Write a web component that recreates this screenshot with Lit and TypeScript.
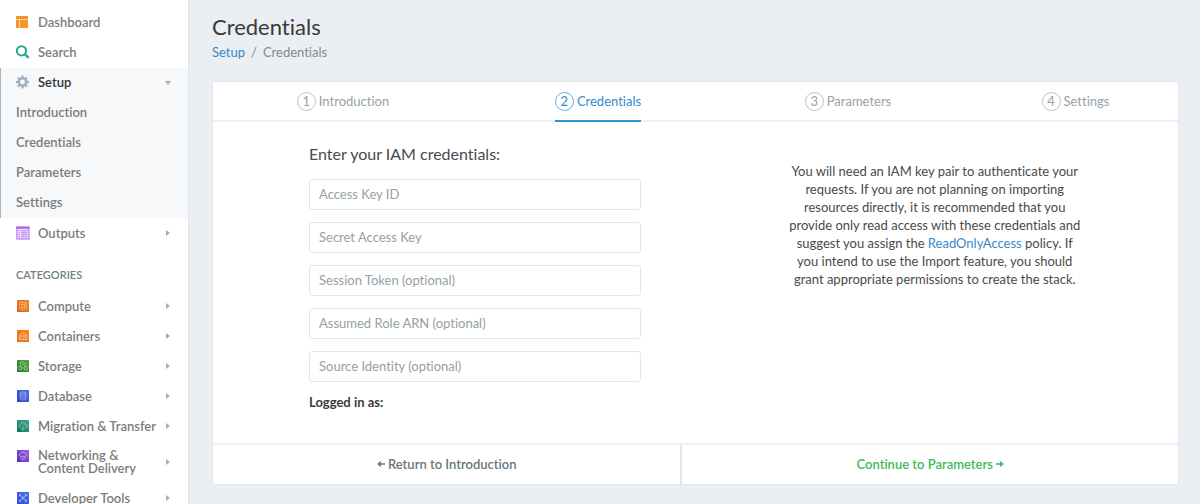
import { LitElement, html, css, svg, nothing } from "lit";
import type { TemplateResult } from "lit";

type IconName =
  | "dashboard" | "search" | "gear" | "outputs" | "compute" | "containers"
  | "storage" | "database" | "migration" | "network" | "tools";

interface NavItem {
  label: string;
  icon: IconName;
  arrow: boolean;
}

const CATEGORIES: NavItem[] = [
  { label: "Compute", icon: "compute", arrow: true },
  { label: "Containers", icon: "containers", arrow: true },
  { label: "Storage", icon: "storage", arrow: true },
  { label: "Database", icon: "database", arrow: true },
  { label: "Migration & Transfer", icon: "migration", arrow: true },
  { label: "Networking & Content Delivery", icon: "network", arrow: true },
  { label: "Developer Tools", icon: "tools", arrow: true },
];

const SETUP_PAGES = ["Introduction", "Credentials", "Parameters", "Settings"];

const FIELDS = [
  "Access Key ID",
  "Secret Access Key",
  "Session Token (optional)",
  "Assumed Role ARN (optional)",
  "Source Identity (optional)",
];

// Service tiles share a gradient square with a pale line glyph on it.
const tile = (id: string, from: string, to: string, glyph: TemplateResult) => svg`
  <defs><linearGradient id=${id} x1="0" y1="1" x2="1" y2="0">
    <stop offset="0" stop-color=${from}/><stop offset="1" stop-color=${to}/>
  </linearGradient></defs>
  <rect x="1" y="1" width="12" height="12" fill=${`url(#${id})`}/>
  <g fill="none" stroke="#fff" stroke-opacity=".5" stroke-width=".8">${glyph}</g>`;

const teeth = [0, 45, 90, 135, 180, 225, 270, 315];

const ICONS: Record<IconName, TemplateResult> = {
  dashboard: svg`<g fill="#f6962a">
    <rect x="0" y="1" width="12" height="3"/><rect x="0" y="4.6" width="3.4" height="8.4"/><rect x="4" y="4.6" width="8" height="8.4"/></g>`,
  search: svg`<g fill="none" stroke="#27a98b" stroke-width="2">
    <circle cx="5.5" cy="5.8" r="4.6"/><path d="M8.8 9.1 12.6 12.8" stroke-width="2.4"/></g>`,
  gear: svg`<circle cx="6.5" cy="7" r="3.6" fill="none" stroke="#a3b1bd" stroke-width="2.4"/>
    <g fill="#a3b1bd">${teeth.map((a) => svg`<rect x="5.3" y=".5" width="2.4" height="2.6" rx=".5" transform=${`rotate(${a} 6.5 7)`}/>`)}</g>`,
  outputs: svg`<rect x=".9" y="1" width="12" height="12" fill="#f0e4fd" stroke="#b57bee" stroke-width="1.2"/>
    <path d="M.3 1.8H13.5" stroke="#a765e6" stroke-width="2"/>
    <path d="M2.6 4.8H4M2.6 6.8H4M2.6 8.8H4M2.6 10.8H4M5 4.8H11.4M5 6.8H11.4M5 8.8H11.4M5 10.8H11.4" stroke="#b57bee" stroke-width="1"/>`,
  compute: tile("g-compute", "#d8601c", "#f88d1e", svg`
    <rect x="3.6" y="3.6" width="6.8" height="6.8" rx="1"/><rect x="5.4" y="5.4" width="3.2" height="3.2"/>`),
  containers: tile("g-containers", "#e8681a", "#f98c14", svg`
    <path d="M3 6.8H11V10.6H3ZM4.8 7V10.6M7 7V10.6M9.2 7V10.6M3 6.4 7 4.2 11 6.4M7 2.4V4.2"/>`),
  storage: tile("g-storage", "#277a2b", "#55a83c", svg`
    <path d="M4.6 6.8V3H7.8L9.2 4.4V6.8M5.8 5.2H8M3 7.4H5.6V10.8H3ZM8.4 7.4H11V10.8H8.4ZM5.6 9H8.4"/>`),
  database: tile("g-database", "#2f42c4", "#4c70f0", svg`
    <ellipse cx="7" cy="4" rx="2.8" ry="1"/><path d="M4.2 4V10C4.2 11.3 9.8 11.3 9.8 10V4M4.2 6C4.2 7.2 9.8 7.2 9.8 6M4.2 8C4.2 9.2 9.8 9.2 9.8 8"/>`),
  migration: tile("g-migration", "#14735e", "#41ac8b", svg`
    <path d="M4.6 8.8C2.6 8.6 2.5 6 4.4 5.9 4.6 3 8.6 2.8 9 5.4 11.6 5.4 11.6 8.6 9.4 8.8M7 6.6V11M5.4 9.6 7 11.2 8.6 9.6"/>`),
  network: tile("g-network", "#5a2bb2", "#9b63ea", svg`
    <path d="M4.4 7.4C2.8 7.2 2.9 5.2 4.5 5.1 4.8 2.5 8.6 2.4 9 4.8 11.2 4.9 11.3 7.2 9.6 7.4ZM4 9H10M5 10.8H9"/>`),
  tools: tile("g-tools", "#2f48d0", "#4a73f2", svg`
    <path d="M3.4 3.4 10.6 10.6M10.6 3.4 3.4 10.6" stroke-width="1.1"/><path d="M2.8 5.2 5.2 2.8M9 11.2 11.2 9M9 2.8 11.2 5M2.8 9 5 11.2"/>`),
};

class NavIcon extends LitElement {
  static properties = { name: {} };
  declare name: IconName;
  static styles = css`
    :host { display: block; width: 14px; height: 14px; }
    .icon { display: block; width: 14px; height: 14px; }
  `;
  render() {
    return html`<svg class="icon" viewBox="0 0 14 14" aria-hidden="true">${ICONS[this.name]}</svg>`;
  }
}
customElements.define("nav-icon", NavIcon);

class SideNav extends LitElement {
  static styles = css`
    :host {
      display: block;
      box-sizing: border-box;
      padding-top: 7px;
      background: #fff;
      border-right: 1px solid #dce4ec;
      overflow: hidden;
    }
    .row {
      box-sizing: border-box;
      display: grid;
      grid-template-columns: 22px 1fr 8px;
      align-items: center;
      min-height: 30px;
      padding: 8px 16px;
      color: #7c7c7a;
      font-weight: 600;
      line-height: 13px;
      text-decoration: none;
    }
    .row nav-icon { align-self: start; }
    .group {
      margin-top: 1px;
      background: #f6f8fa;
      box-shadow: inset 1px 0 #a9b6bf;
    }
    .row.current { padding: 7px 16px 9px; color: #333; }
    .row.sub { display: block; }
    .heading {
      margin: 17px 16px 6px;
      color: #6f8087;
      font-size: 11px;
      font-weight: 600;
      line-height: 20px;
      text-transform: uppercase;
    }
    .arrow { width: 8px; height: 8px; fill: #a3aeb6; }
    .label { max-width: 120px; }
    .list { display: grid; }
  `;

  private row(item: NavItem) {
    return html`<a class="row" href="#">
      <nav-icon name=${item.icon}></nav-icon>
      <span class="label">${item.label}</span>
      ${item.arrow
        ? html`<svg class="arrow" viewBox="0 0 8 8" aria-hidden="true"><path d="M2 1 6 4 2 7Z" /></svg>`
        : nothing}
    </a>`;
  }

  render() {
    return html`<nav aria-label="Main">
      ${this.row({ label: "Dashboard", icon: "dashboard", arrow: false })}
      ${this.row({ label: "Search", icon: "search", arrow: false })}
      <div class="group">
        <a class="row current" href="#">
          <nav-icon name="gear"></nav-icon>
          <span class="label">Setup</span>
          <svg class="arrow" viewBox="0 0 8 8" aria-hidden="true"><path d="M1 3H7L4 7Z" /></svg>
        </a>
        ${SETUP_PAGES.map((p) => html`<a class="row sub" href="#">${p}</a>`)}
      </div>
      ${this.row({ label: "Outputs", icon: "outputs", arrow: true })}
      <h2 class="heading">Categories</h2>
      <div class="list">${CATEGORIES.map((c) => this.row(c))}</div>
    </nav>`;
  }
}
customElements.define("side-nav", SideNav);

class AppRoot extends LitElement {
  static styles = css`
    :host {
      display: grid;
      grid-template-columns: 189px minmax(0, 1fr);
      height: 100vh;
      overflow: hidden;
      background: #ebeef3;
      color: #4a4a4a;
      font-family: Lato, "Liberation Sans", sans-serif;
      font-size: 13px;
      font-variant-ligatures: none;
    }
    .main { padding: 14px 21px 19px 23px; overflow: hidden; }
    .title { margin: 0; color: #3a3a3a; font-size: 22px; font-weight: 400; line-height: 26px; }
    .crumbs {
      display: flex;
      gap: 6px;
      margin-top: 2px;
      color: #7f898e;
      line-height: 20px;
    }
    .link { color: #3689ca; text-decoration: none; }
    .card {
      margin-top: 19px;
      background: #fff;
      border: 1px solid #dfe6ec;
      border-radius: 3px;
    }
    .tabs {
      display: grid;
      grid-template-columns: 52fr 50fr 50fr 41fr;
      justify-items: center;
      box-shadow: inset 0 -2px #edf2f4;
    }
    .tab {
      box-sizing: border-box;
      display: flex;
      align-items: center;
      gap: 3px;
      height: 40px;
      color: #98a2a8;
      text-decoration: none;
      border-bottom: 2px solid transparent;
    }
    .tab.active { color: #3689ca; border-color: #3292cf; }
    .num {
      box-sizing: border-box;
      width: 19px;
      height: 19px;
      border: 1px solid #bcc4cb;
      border-radius: 50%;
      line-height: 17px;
      text-align: center;
    }
    .active .num { border-color: #5eb0e2; }
    .body {
      display: flex;
      justify-content: space-between;
      padding: 22px 10% 31px;
      padding-left: 96px;
    }
    .form { width: 43%; }
    .prompt { margin: 0 0 15px; font-size: 16px; font-weight: 400; line-height: 20px; }
    .fields { display: grid; gap: 12px; }
    .field {
      box-sizing: border-box;
      display: block;
      width: 100%;
      height: 31px;
      padding: 0 9px 2px;
      border: 1px solid #dfe9ec;
      border-radius: 3px;
      background: #fff;
      color: #444;
      font: inherit;
    }
    .field::placeholder { color: #94a1a5; opacity: 1; }
    .session { margin: 10px 0 0; color: #3a3a3a; font-weight: 700; line-height: 20px; }
    .help { width: 38%; margin: 18px 0 0; line-height: 18px; text-align: center; }
    .actions {
      display: grid;
      grid-template-columns: 31fr 33fr;
      border-top: 2px solid #edf2f4;
    }
    .action {
      display: flex;
      align-items: center;
      justify-content: center;
      gap: 3px;
      height: 39px;
      padding: 0 0 2px;
      border: 0;
      background: none;
      color: #66777e;
      font: inherit;
      font-weight: 600;
    }
    .action + .action { border-left: 2px solid #dfe6ec; color: #3cba58; }
    .glyph { width: 8px; height: 8px; fill: currentColor; }
  `;

  render() {
    return html`
      <side-nav></side-nav>
      <main class="main">
        <h1 class="title">Credentials</h1>
        <nav class="crumbs" aria-label="Breadcrumb">
          <a class="link" href="#">Setup</a><span>/</span><span>Credentials</span>
        </nav>
        <section class="card">
          <nav class="tabs" aria-label="Setup steps">
            ${SETUP_PAGES.map((p, i) => html`<a class="tab ${i === 1 ? "active" : ""}" href="#"
              ><span class="num">${i + 1}</span><span>${p}</span></a>`)}
          </nav>
          <div class="body">
            <form class="form">
              <h2 class="prompt">Enter your IAM credentials:</h2>
              <div class="fields">
                ${FIELDS.map((f) => html`<input class="field" type="text" aria-label=${f} placeholder=${f} />`)}
              </div>
              <p class="session">Logged in as:</p>
            </form>
            <p class="help">
              You will need an IAM key pair to authenticate your requests. If you are not
              planning on importing resources directly, it is recommended that you provide
              only read access with these credentials and suggest you assign the
              <a class="link" href="#">ReadOnlyAccess</a> policy. If you intend to use the
              Import feature, you should grant appropriate permissions to create the stack.
            </p>
          </div>
          <div class="actions">
            <button class="action" type="button">
              <svg class="glyph" viewBox="0 0 8 8" aria-hidden="true"><path d="M0 4 4 1V3.2H8V4.8H4V7Z" /></svg>
              Return to Introduction
            </button>
            <button class="action" type="button">
              Continue to Parameters
              <svg class="glyph" viewBox="0 0 8 8" aria-hidden="true"><path d="M8 4 4 1V3.2H0V4.8H4V7Z" /></svg>
            </button>
          </div>
        </section>
      </main>
    `;
  }
}
customElements.define("app-root", AppRoot);
